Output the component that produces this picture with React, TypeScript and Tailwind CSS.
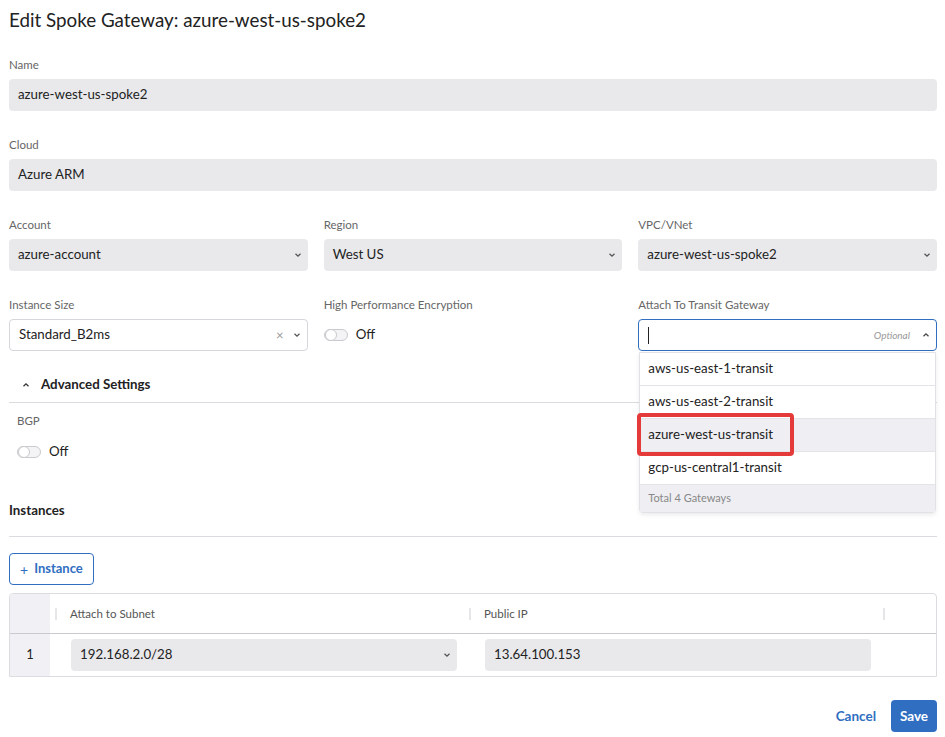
import React from "react";

const font = { fontFamily: "Lato, 'Noto Sans', sans-serif" };

function ChevronDown() {
  return (
    <svg width="8" height="6" viewBox="0 0 8 6" className="text-[#555]">
      <polyline points="1.5,1.8 4,4.2 6.5,1.8" fill="none" stroke="currentColor" strokeWidth="1.3" />
    </svg>
  );
}

function ChevronUp({ className = "" }: { className?: string }) {
  return (
    <svg width="8" height="6" viewBox="0 0 8 6" className={className}>
      <polyline points="1.5,4.2 4,1.8 6.5,4.2" fill="none" stroke="currentColor" strokeWidth="1.3" />
    </svg>
  );
}

function Label({ children }: { children: React.ReactNode }) {
  return <div className="mb-[6px] h-4 text-[11.5px] leading-4 text-[#666]">{children}</div>;
}

function ReadonlyInput({ value }: { value: string }) {
  return (
    <div className="flex h-8 items-center rounded bg-[#e9e9ec] px-[9px] text-[13.3px] text-[#222]">
      {value}
    </div>
  );
}

function SelectBox({ value }: { value: string }) {
  return (
    <div className="flex h-8 items-center justify-between rounded bg-[#e9e9ec] pl-[9px] pr-[6px] text-[13.3px] text-[#222]">
      <span>{value}</span>
      <ChevronDown />
    </div>
  );
}

function Toggle() {
  return (
    <div className="flex items-center gap-2">
      <div className="relative h-[12px] w-[24px] rounded-full border border-[#c9c9ce] bg-[#f4f4f6]">
        <div className="absolute left-0 top-[-1px] h-[12px] w-[12px] rounded-full border border-[#c9c9ce] bg-white" />
      </div>
      <span className="text-[13.3px] text-[#222]">Off</span>
    </div>
  );
}

const gateways = ["aws-us-east-1-transit", "aws-us-east-2-transit", "azure-west-us-transit", "gcp-us-central1-transit"];

export default function App() {
  return (
    <div className="min-h-[737px] bg-white pb-[5px] pl-[9px] pr-2 pt-[6px]" style={font}>
      <h1 className="h-7 text-[18.8px] leading-7 text-[#222]">Edit Spoke Gateway: azure-west-us-spoke2</h1>

      <div className="mt-[23px] flex flex-col gap-[26px]">
        <div>
          <Label>Name</Label>
          <ReadonlyInput value="azure-west-us-spoke2" />
        </div>
        <div>
          <Label>Cloud</Label>
          <ReadonlyInput value="Azure ARM" />
        </div>
        <div className="grid grid-cols-3 gap-x-4">
          <div>
            <Label>Account</Label>
            <SelectBox value="azure-account" />
          </div>
          <div>
            <Label>Region</Label>
            <SelectBox value="West US" />
          </div>
          <div>
            <Label>VPC/VNet</Label>
            <SelectBox value="azure-west-us-spoke2" />
          </div>
        </div>
        <div className="grid grid-cols-3 gap-x-4">
          <div>
            <Label>Instance Size</Label>
            <div className="flex h-8 items-center justify-between rounded border border-[#d6d6db] bg-white pl-[9px] pr-[6px] text-[13.3px] text-[#222]">
              <span>Standard_B2ms</span>
              <div className="flex items-center gap-[9px]">
                <span className="text-[13px] leading-none text-[#999]">×</span>
                <ChevronDown />
              </div>
            </div>
          </div>
          <div>
            <Label>High Performance Encryption</Label>
            <div className="flex h-8 items-center">
              <Toggle />
            </div>
          </div>
          <div className="relative">
            <Label>Attach To Transit Gateway</Label>
            <div className="flex h-8 items-center justify-between rounded border border-[#2f6ec1] bg-white pl-[9px] pr-[6px]">
              <div className="h-[17px] w-px bg-[#222]" />
              <div className="flex items-center gap-[12px]">
                <span className="text-[10px] italic text-[#999]">Optional</span>
                <ChevronUp className="text-[#444]" />
              </div>
            </div>
            <div className="absolute left-px right-px top-[55px] z-10 rounded-b border border-[#e2e2e6] bg-white shadow-[0_2px_4px_rgba(0,0,0,0.08)]">
              {gateways.map((g, i) => (
                <div
                  key={g}
                  className={
                    "flex h-[33px] items-center border-b border-[#e4e4e8] px-2 text-[13.3px] text-[#222] " +
                    (i === 2 ? "bg-[#efeff3]" : "bg-white")
                  }
                >
                  {g}
                </div>
              ))}
              <div className="flex h-[27px] items-center bg-[#efeff3] px-2 text-[11px] text-[#888]">Total 4 Gateways</div>
              <div className="absolute left-[-3px] top-[60px] h-[43px] w-[157px] rounded-[4px] border-4 border-[#e53a3a]" />
            </div>
          </div>
        </div>
      </div>

      <div className="mt-[26px] flex h-[26px] items-center border-b border-[#dcdce0] pb-[10px] pl-[13px]">
        <ChevronUp className="text-[#333]" />
        <span className="ml-[11px] text-[13.3px] font-bold text-[#222]">Advanced Settings</span>
      </div>
      <div className="pl-2 pt-[10px]">
        <div className="h-4 text-[11.5px] leading-4 text-[#666]">BGP</div>
        <div className="mt-[13px] flex h-5 items-center">
          <Toggle />
        </div>
      </div>

      <div className="mt-[40px] border-b border-[#dcdce0] pb-[18px] text-[13.3px] font-bold leading-4 text-[#222]">Instances</div>

      <button className="mt-4 flex h-8 items-center gap-[6px] rounded border border-[#2f6ec1] bg-white px-[10px] text-[13px] font-bold text-[#2f6ec1]">
        <span className="text-[14px] font-normal">+</span>
        <span>Instance</span>
      </button>

      <div className="mt-2 overflow-hidden rounded-t border border-[#dcdce0]">
        <div className="grid grid-cols-[40px_414px_414px_1fr] border-b border-[#c9c9d0]">
          <div className="h-[39px] bg-[#f1f1f5]" />
          {["Attach to Subnet", "Public IP", ""].map((h, i) => (
            <div key={i} className="flex h-[39px] items-center pl-[5px]">
              <div className="h-[12px] w-[2px] bg-[#e6e6e9]" />
              <span className="ml-[13px] text-[11.5px] text-[#555]">{h}</span>
            </div>
          ))}
        </div>
        <div className="grid grid-cols-[40px_414px_414px_1fr]">
          <div className="flex h-[42px] items-center justify-center bg-[#f1f1f5] text-[13px] text-[#222]">1</div>
          <div className="flex items-center pl-[21px] pr-[7px]">
            <div className="w-full">
              <SelectBox value="192.168.2.0/28" />
            </div>
          </div>
          <div className="flex items-center pl-[21px] pr-[7px]">
            <div className="w-full">
              <ReadonlyInput value="13.64.100.153" />
            </div>
          </div>
          <div />
        </div>
      </div>

      <div className="mt-[23px] flex items-center justify-end gap-[15px]">
        <button className="text-[13.5px] font-bold text-[#2f6ec1]">Cancel</button>
        <button className="flex h-8 w-[46px] items-center justify-center rounded bg-[#2f6ec1] text-[13.5px] font-bold text-white">
          Save
        </button>
      </div>
    </div>
  );
}
